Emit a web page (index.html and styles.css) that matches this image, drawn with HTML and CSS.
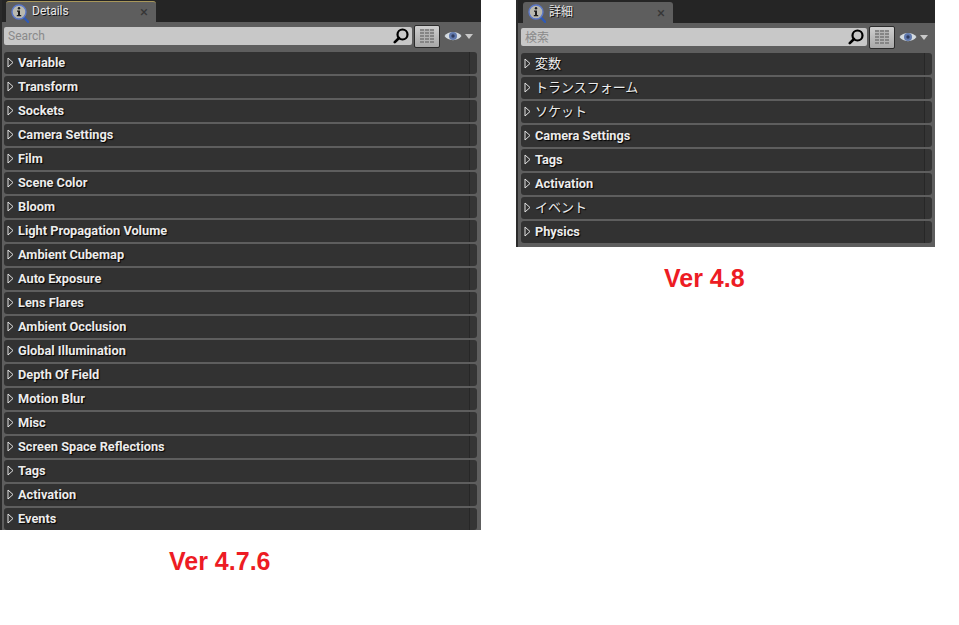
FILE: index.html
```html
<!DOCTYPE html>
<html lang="en">
<head>
    <meta charset="UTF-8">
    <meta name="viewport" content="width=device-width, initial-scale=1.0">
    <title>Details panel comparison</title>
    <link rel="stylesheet" href="styles.css">
</head>
<body>
    <svg class="defs" width="0" height="0">
        <symbol id="arrow" viewBox="0 0 7 11">
            <path d="M1 1 L6 5.5 L1 10 Z" fill="none" stroke="#e2e2e2" stroke-width="1"/>
        </symbol>
        <symbol id="info" viewBox="0 0 18 19">
            <path d="M12.5 13 L17 17.8" stroke="#2d59b8" stroke-width="2.4" stroke-linecap="round"/>
            <circle cx="8" cy="8" r="7" fill="#b9b9b0" stroke="#5b78c9" stroke-width="1.4"/>
            <circle cx="8" cy="4.2" r="1.2" fill="#1e1e1e"/>
            <path d="M6 6.6 H9 V11 H10.2 V12.2 H5.8 V11 H7 V7.8 H6 Z" fill="#1e1e1e"/>
        </symbol>
        <symbol id="glass" viewBox="0 0 16 16">
            <circle cx="9.5" cy="6.5" r="5" fill="none" stroke="#000" stroke-width="2.2"/>
            <path d="M6 10 L1.8 14.2" stroke="#000" stroke-width="2.6" stroke-linecap="round"/>
        </symbol>
        <symbol id="grid" viewBox="0 0 14 14">
            <path d="M0 0 H14 V14 H0 Z" fill="#858585"/>
            <path d="M0 2.5 H14 M0 5.5 H14 M0 8.5 H14 M0 11.5 H14 M4.5 0 V14 M9.5 0 V14" stroke="#b4b4b4" stroke-width="1"/>
        </symbol>
        <symbol id="eye" viewBox="0 0 18 12">
            <path d="M0.5 6 C4 0.5 14 0.5 17.5 6 C14 11.5 4 11.5 0.5 6 Z" fill="#d4dbe0"/>
            <circle cx="9" cy="6" r="4" fill="#6079ad"/>
            <circle cx="9" cy="6" r="1.7" fill="#2f3c5e"/>
        </symbol>
    </svg>

    <div class="page">
        <div class="col col-old">
            <div class="panel">
                <div class="tabbar">
                    <div class="tab">
                        <svg class="tab-icon"><use href="#info"/></svg>
                        <span class="tab-label">Details</span>
                        <span class="tab-close">×</span>
                    </div>
                </div>
                <div class="toolbar">
                    <div class="search">
                        <span class="search-hint">Search</span>
                        <svg class="glass"><use href="#glass"/></svg>
                    </div>
                    <div class="grid-btn"><svg class="grid"><use href="#grid"/></svg></div>
                    <svg class="eye"><use href="#eye"/></svg>
                    <span class="caret"></span>
                </div>
                <div class="rows">
                    <div class="row"><svg class="arrow"><use href="#arrow"/></svg><span>Variable</span></div>
                    <div class="row"><svg class="arrow"><use href="#arrow"/></svg><span>Transform</span></div>
                    <div class="row"><svg class="arrow"><use href="#arrow"/></svg><span>Sockets</span></div>
                    <div class="row"><svg class="arrow"><use href="#arrow"/></svg><span>Camera Settings</span></div>
                    <div class="row"><svg class="arrow"><use href="#arrow"/></svg><span>Film</span></div>
                    <div class="row"><svg class="arrow"><use href="#arrow"/></svg><span>Scene Color</span></div>
                    <div class="row"><svg class="arrow"><use href="#arrow"/></svg><span>Bloom</span></div>
                    <div class="row"><svg class="arrow"><use href="#arrow"/></svg><span>Light Propagation Volume</span></div>
                    <div class="row"><svg class="arrow"><use href="#arrow"/></svg><span>Ambient Cubemap</span></div>
                    <div class="row"><svg class="arrow"><use href="#arrow"/></svg><span>Auto Exposure</span></div>
                    <div class="row"><svg class="arrow"><use href="#arrow"/></svg><span>Lens Flares</span></div>
                    <div class="row"><svg class="arrow"><use href="#arrow"/></svg><span>Ambient Occlusion</span></div>
                    <div class="row"><svg class="arrow"><use href="#arrow"/></svg><span>Global Illumination</span></div>
                    <div class="row"><svg class="arrow"><use href="#arrow"/></svg><span>Depth Of Field</span></div>
                    <div class="row"><svg class="arrow"><use href="#arrow"/></svg><span>Motion Blur</span></div>
                    <div class="row"><svg class="arrow"><use href="#arrow"/></svg><span>Misc</span></div>
                    <div class="row"><svg class="arrow"><use href="#arrow"/></svg><span>Screen Space Reflections</span></div>
                    <div class="row"><svg class="arrow"><use href="#arrow"/></svg><span>Tags</span></div>
                    <div class="row"><svg class="arrow"><use href="#arrow"/></svg><span>Activation</span></div>
                    <div class="row"><svg class="arrow"><use href="#arrow"/></svg><span>Events</span></div>
                </div>
            </div>
            <div class="version">Ver 4.7.6</div>
        </div>

        <div class="col col-new">
            <div class="panel">
                <div class="tabbar">
                    <div class="tab">
                        <svg class="tab-icon"><use href="#info"/></svg>
                        <span class="tab-label jp">詳細</span>
                        <span class="tab-close">×</span>
                    </div>
                </div>
                <div class="toolbar">
                    <div class="search">
                        <span class="search-hint jp">検索</span>
                        <svg class="glass"><use href="#glass"/></svg>
                    </div>
                    <div class="grid-btn"><svg class="grid"><use href="#grid"/></svg></div>
                    <svg class="eye"><use href="#eye"/></svg>
                    <span class="caret"></span>
                </div>
                <div class="rows">
                    <div class="row"><svg class="arrow"><use href="#arrow"/></svg><span class="jp">変数</span></div>
                    <div class="row"><svg class="arrow"><use href="#arrow"/></svg><span class="jp">トランスフォーム</span></div>
                    <div class="row"><svg class="arrow"><use href="#arrow"/></svg><span class="jp">ソケット</span></div>
                    <div class="row"><svg class="arrow"><use href="#arrow"/></svg><span>Camera Settings</span></div>
                    <div class="row"><svg class="arrow"><use href="#arrow"/></svg><span>Tags</span></div>
                    <div class="row"><svg class="arrow"><use href="#arrow"/></svg><span>Activation</span></div>
                    <div class="row"><svg class="arrow"><use href="#arrow"/></svg><span class="jp">イベント</span></div>
                    <div class="row"><svg class="arrow"><use href="#arrow"/></svg><span>Physics</span></div>
                </div>
            </div>
            <div class="version">Ver 4.8</div>
        </div>
    </div>
</body>
</html>
```

FILE: styles.css
```css
body {
    margin: 0;
    padding: 0;
    background: #fff;
    font-family: Roboto, "Liberation Sans", sans-serif;
    overflow: hidden;
}
.defs {
    position: absolute;
}
.page {
    display: flex;
    align-items: flex-start;
    gap: 35px;
}
.col-old {
    width: 481px;
}
.col-new {
    width: 419px;
}
.panel {
    background: #5e5e5e;
    border-left: 2px solid #2b2b2b;
    box-sizing: border-box;
    overflow: hidden;
}
.col-old .panel {
    height: 530px;
}
.col-new .panel {
    height: 247px;
}

/* tab strip */
.tabbar {
    height: 22px;
    padding-left: 4px;
    background: #252525;
    display: flex;
    align-items: flex-end;
}
.col-new .tabbar {
    height: 23px;
    padding-left: 5px;
}
.tab {
    width: 150px;
    height: 21px;
    background: #5e5e5e;
    border-radius: 3px 3px 0 0;
    box-sizing: border-box;
    display: flex;
    align-items: center;
    color: #e8e8e8;
    font-size: 12px;
    text-shadow: 1px 1px 0 #111;
}
.col-old .tab {
    border-top: 1px solid #a8975a;
}
.tab-icon {
    width: 18px;
    height: 19px;
    margin-left: 5px;
    margin-top: 2px;
}
.tab-label {
    margin-left: 3px;
    padding-bottom: 2px;
    flex: 1;
}
.tab-label.jp {
    padding-bottom: 4px;
}
.tab-close {
    color: #363636;
    font-size: 15px;
    margin-right: 8px;
    text-shadow: none;
}

/* search + view options */
.toolbar {
    height: 28px;
    padding: 0 8px 0 2px;
    display: flex;
    align-items: center;
}
.col-new .toolbar {
    padding: 0 7px 0 3px;
}
.search {
    flex: 1;
    height: 18px;
    background: #c8c8c8;
    border-radius: 2px;
    display: flex;
    align-items: center;
    justify-content: space-between;
}
.search-hint {
    margin-left: 4px;
    color: #8a8a8a;
    font-size: 12px;
}
.search-hint.jp {
    padding-bottom: 2px;
}
.glass {
    width: 16px;
    height: 16px;
    margin-right: 3px;
}
.grid-btn {
    width: 26px;
    height: 23px;
    margin-left: 2px;
    box-sizing: border-box;
    border: 1px solid #2b2b2b;
    border-radius: 2px;
    background: linear-gradient(#cfcfcf, #a8a8a8);
    display: flex;
    align-items: center;
    justify-content: center;
}
.grid {
    width: 14px;
    height: 14px;
}
.eye {
    width: 18px;
    height: 12px;
    margin-left: 4px;
}
.caret {
    width: 0;
    height: 0;
    margin: 0 0 0 3px;
    border-left: 4.5px solid transparent;
    border-right: 4.5px solid transparent;
    border-top: 5px solid #c8c8c8;
}

/* category rows */
.rows {
    display: flex;
    flex-direction: column;
    gap: 2px;
    padding: 2px 4px 0 2px;
}
.col-new .rows {
    padding: 2px 3px 0 3px;
}
.row {
    flex: none;
    height: 22px;
    padding-bottom: 2px;
    background: linear-gradient(90deg, #323232 calc(100% - 8px), #272727 calc(100% - 8px), #272727 calc(100% - 7px), #353535 calc(100% - 7px));
    border-radius: 3px;
    display: flex;
    align-items: center;
    color: #ececec;
    font-size: 12.75px;
    font-weight: 700;
    text-shadow: 1px 1px 1px #000;
    box-sizing: border-box;
}
.arrow {
    width: 7px;
    height: 11px;
    margin: 0 4px 0 3px;
}
.jp {
    font-family: "Noto Sans CJK JP", sans-serif;
    font-size: 13px;
    font-weight: 400;
}
.row .jp {
    padding-bottom: 2px;
}
.tab-label.jp, .search-hint.jp {
    font-size: 12px;
}

/* captions */
.version {
    color: #ed1c24;
    font-family: "Liberation Sans", sans-serif;
    font-size: 25px;
    font-weight: 700;
}
.col-old .version {
    margin: 17px 0 0 169px;
}
.col-new .version {
    margin: 17px 0 0 148px;
}
```
